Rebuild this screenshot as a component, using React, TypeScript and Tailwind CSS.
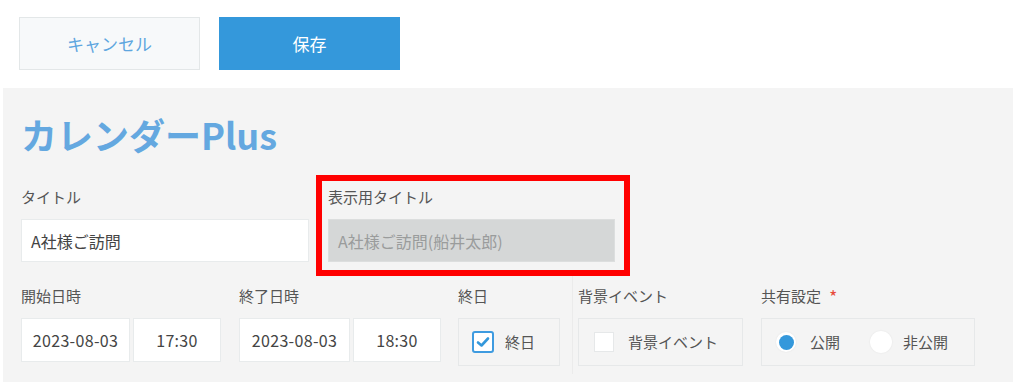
import React from 'react';

const font = { fontFamily: '"Noto Sans CJK JP", "Noto Sans", sans-serif' };

const Label: React.FC<{ children: React.ReactNode; required?: boolean }> = ({ children, required }) => (
  <div className="h-5 leading-5 text-[15px] text-[#555] mb-[12px] flex items-center gap-1">
    {children}
    {required && <span className="text-[#e74c3c] text-[18px] leading-5 ml-1">*</span>}
  </div>
);

const Field: React.FC<{ value: string; className?: string }> = ({ value, className }) => (
  <div className={`h-[44px] bg-white border border-[#e8ebec] flex items-center justify-center text-[16px] tracking-[0.02em] text-[#444] ${className ?? ''}`}>
    {value}
  </div>
);

export default function App() {
  return (
    <div style={font} className="w-[1024px] h-[386px] bg-white overflow-hidden">
      {/* buttons */}
      <div className="flex gap-[19px] pl-[19px] pt-[17px]">
        <button className="w-[181px] h-[53px] bg-[#f7f9fa] border border-[#e3e7e8] text-[#5ea6df] text-[17px]">キャンセル</button>
        <button className="w-[181px] h-[53px] bg-[#3498db] border border-[#3498db] text-white text-[17px]">保存</button>
      </div>

      {/* form panel */}
      <div className="ml-[3px] mt-[18px] w-[1010px] h-[294px] bg-[#f4f4f4] pl-[18px] pt-[20px]">
        <div className="text-[36px] font-bold leading-[52px] text-[#64a8e0]">カレンダーPlus</div>

        <div className="flex items-start mt-[15px]">
          <div className="w-[288px] pt-[12px]">
            <Label>タイトル</Label>
            <div className="h-[43px] bg-white border border-[#e8ebec] flex items-center px-[9px] text-[16px] text-[#444]">A社様ご訪問</div>
          </div>
          <div className="ml-[7px] border-[6px] border-[#ff0000] w-[314px] pl-[6px] pr-[9px] pt-[6px] pb-[8px]">
            <Label>表示用タイトル</Label>
            <div className="h-[43px] bg-[#d5d7d7] border border-[#dcdede] flex items-center px-[9px] text-[16px] text-[#9a9c9c]">A社様ご訪問(船井太郎)</div>
          </div>
        </div>

        <div className="flex items-start mt-[10px]">
          <div>
            <Label>開始日時</Label>
            <div className="flex gap-[3px]">
              <Field value="2023-08-03" className="w-[109px]" />
              <Field value="17:30" className="w-[88px]" />
            </div>
          </div>
          <div className="ml-[18px]">
            <Label>終了日時</Label>
            <div className="flex gap-[3px]">
              <Field value="2023-08-03" className="w-[111px]" />
              <Field value="18:30" className="w-[88px]" />
            </div>
          </div>
          <div className="ml-[17px]">
            <Label>終日</Label>
            <div className="w-[102px] h-[48px] border border-[#e6e8e9] flex items-center pl-[13px] gap-[11px] text-[15px] text-[#555]">
              <span className="w-[22px] h-[22px] rounded-[3px] border-2 border-[#3e9be0] bg-white flex items-center justify-center">
                <svg width="14" height="12" viewBox="0 0 14 12">
                  <path d="M2 6.5 L5.5 9.5 L12 2.5" fill="none" stroke="#3498db" strokeWidth="2.6" strokeLinecap="round" strokeLinejoin="round" />
                </svg>
              </span>
              終日
            </div>
          </div>
          <div className="ml-[12px] border-l border-[#ebebeb] pl-[5px] -mt-[10px] pt-[10px] h-[98px]">
            <Label>背景イベント</Label>
            <div className="w-[165px] h-[48px] border border-[#e6e8e9] flex items-center pl-[15px] gap-[14px] text-[15px] text-[#555]">
              <span className="w-[20px] h-[20px] bg-white border border-[#e6e8e9]" />
              背景イベント
            </div>
          </div>
          <div className="ml-[18px]">
            <Label required>共有設定</Label>
            <div className="w-[214px] h-[48px] border border-[#e6e8e9] flex items-center pl-[14px] text-[15px] text-[#555]">
              <span className="w-[20px] h-[20px] rounded-full bg-white flex items-center justify-center shadow-[0_0_2px_rgba(0,0,0,0.08)]">
                <span className="w-[15px] h-[15px] rounded-full bg-[#3498db]" />
              </span>
              <span className="ml-[14px]">公開</span>
              <span className="ml-[30px] w-[22px] h-[22px] rounded-full bg-white shadow-[0_0_2px_rgba(0,0,0,0.08)]" />
              <span className="ml-[11px]">非公開</span>
            </div>
          </div>
        </div>
      </div>
    </div>
  );
}
